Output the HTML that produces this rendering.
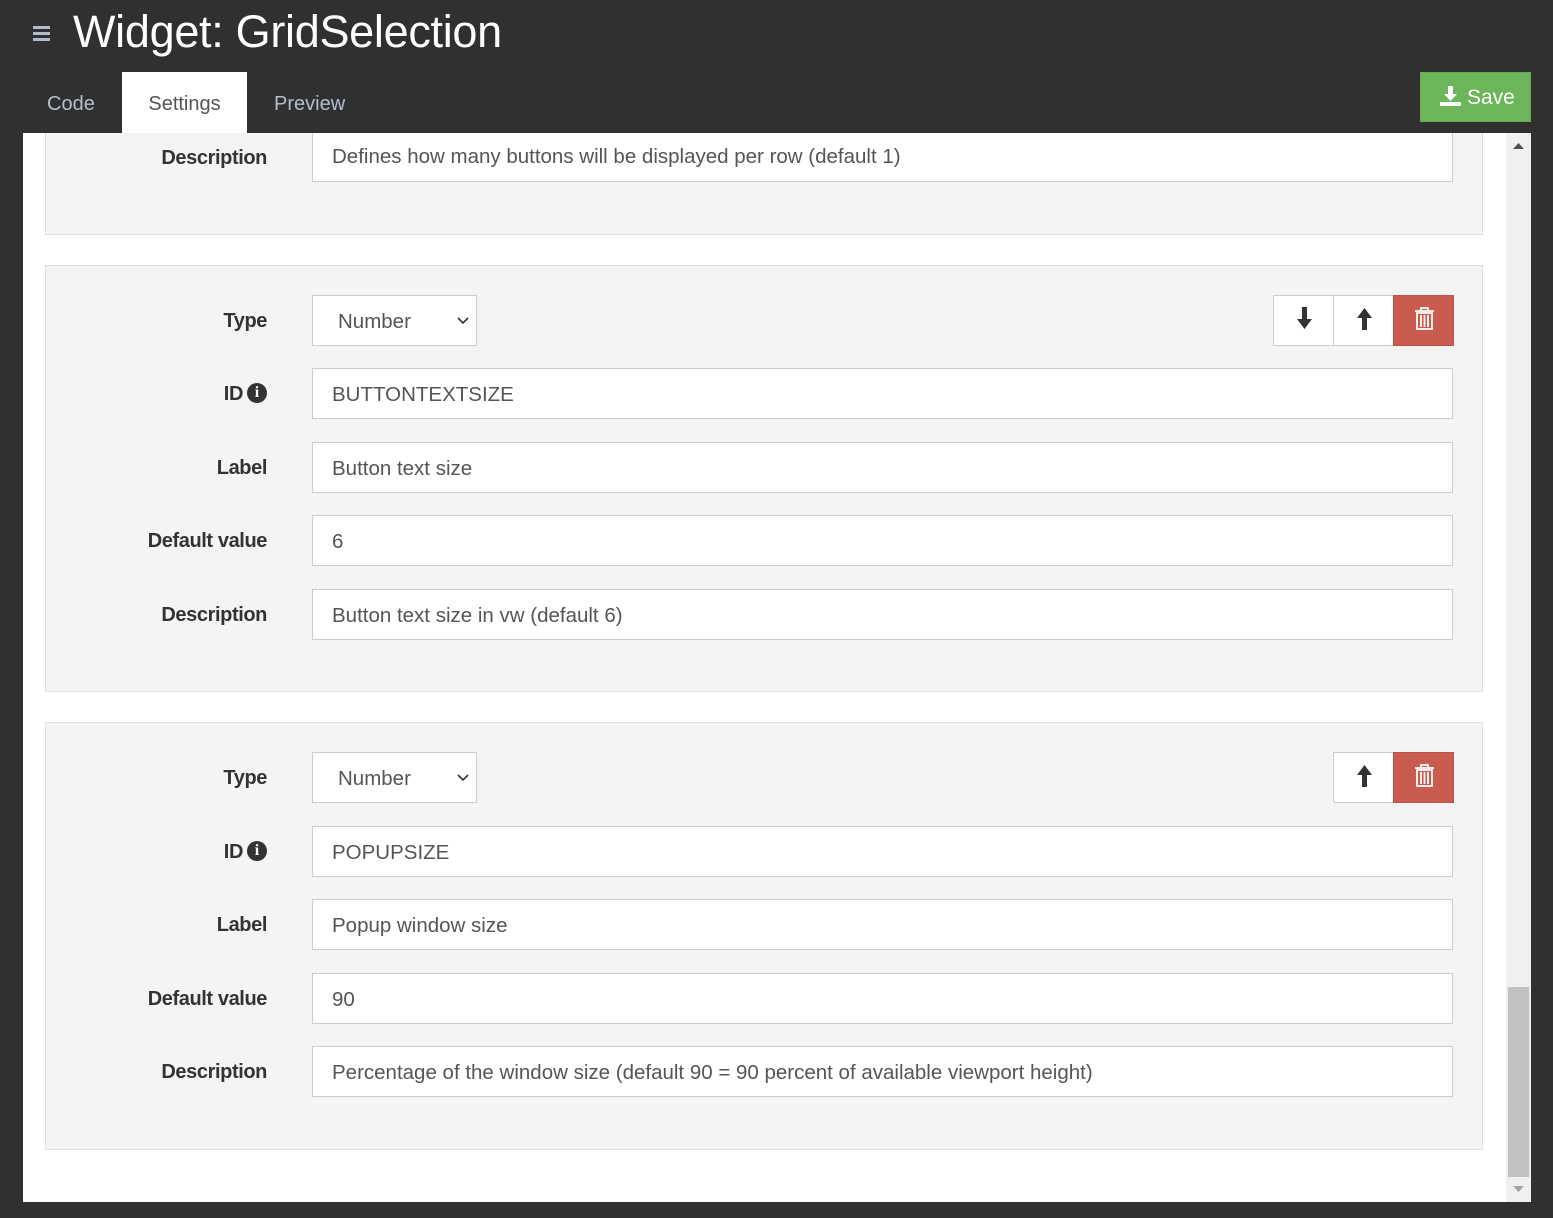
<!DOCTYPE html>
<html><head><meta charset="utf-8">
<style>
*{box-sizing:border-box;margin:0;padding:0}
body{width:1553px;height:1218px;background:#303030;position:relative;overflow:hidden;font-family:"Liberation Sans",Arial,sans-serif}
.a{position:absolute}
.title{left:73px;top:6px;font-size:45px;color:#fff;letter-spacing:-0.3px}
.hb{left:33px;width:17px;height:3px;background:#b0bccc}
.tab{top:72px;height:61px;font-size:20px;line-height:64px;color:#b3bfcf}
.save{left:1420px;top:72px;width:111px;height:50px;background:#6db55b;border:1px solid #64ab52;color:#fff;font-size:21px;line-height:50px;padding-left:46px}
.content{left:23px;top:133px;width:1508px;height:1069px;background:#fff}
.panel{left:45px;width:1438px;background:#f4f4f4;border:1px solid #e0e0e0}
.lbl{left:60px;width:207px;text-align:right;font-size:20px;font-weight:bold;color:#333;letter-spacing:-0.4px;height:50px;line-height:52px}
.inp{left:312px;width:1141px;height:51px;background:#fff;border:1px solid #ccc;font-size:20.5px;line-height:51px;padding-left:19px;color:#555;white-space:nowrap;overflow:hidden}
.sel{left:312px;width:165px;height:51px;background:#fff;border:1px solid #ccc;font-size:20.5px;line-height:51px;padding-left:25px;color:#555}
.btn{width:61px;height:51px;background:#fff;border:1px solid #ccc}
.del{background:#c95c4e;border-color:#c0504a}
.info{display:inline-block;width:20px;height:20px;border-radius:50%;background:#333;color:#fff;font-size:16px;line-height:20px;text-align:center;font-family:"Liberation Serif",serif;font-weight:bold;vertical-align:3px;margin-left:4px;letter-spacing:0}
</style></head><body>
<div class="a hb" style="top:26px"></div>
<div class="a hb" style="top:32px"></div>
<div class="a hb" style="top:38px"></div>
<div class="a title">Widget: GridSelection</div>
<div class="a tab" style="left:47px">Code</div>
<div class="a tab" style="left:274px">Preview</div>
<div class="a save"><svg class="a" style="left:19px;top:13px" width="21" height="21" viewBox="0 0 21 21"><path d="M8 0h5v8h4l-6.5 7L4 8h4z" fill="#fff"/><rect x="0" y="16" width="21" height="4" fill="#fff"/></svg>Save</div>
<div class="a content"></div>
<div class="a tab" style="left:122px;width:125px;height:62px;background:#fff;color:#555;text-align:center">Settings</div>
<!-- scrollbar -->
<div class="a" style="left:1506px;top:133px;width:25px;height:1069px;background:#f0f0f0"></div>
<div class="a" style="left:1508px;top:987px;width:21px;height:190px;background:#c1c1c1"></div>
<svg class="a" style="left:1513px;top:143px" width="11" height="6"><path d="M0 6L5.5 0 11 6z" fill="#505050"/></svg>
<svg class="a" style="left:1513px;top:1186px" width="11" height="6"><path d="M0 0h11L5.5 6z" fill="#a3a3a3"/></svg>

<!-- panel 1 -->
<div class="a panel" style="top:133px;height:102px;border-top:none"></div>
<div class="a lbl" style="top:132px">Description</div>
<div class="a inp" style="top:133px;height:49px;border-top:none;line-height:47px">Defines how many buttons will be displayed per row (default 1)</div>

<!-- panel 2 -->
<div class="a panel" style="top:265px;height:427px"></div>
<div class="a lbl" style="top:295px">Type</div>
<div class="a sel" style="top:295px">Number<svg class="a" style="left:144px;top:21px" width="12" height="8"><path d="M1 1l5 5 5-5" stroke="#333" stroke-width="1.6" fill="none"/></svg></div>
<div class="a btn" style="left:1273px;top:295px"><svg class="a" style="left:22px;top:11px" width="17" height="23"><path d="M6 0h5v12h5l-7.5 10L1 12h5z" fill="#333"/></svg></div>
<div class="a btn" style="left:1333px;top:295px"><svg class="a" style="left:22px;top:11px" width="17" height="23"><path d="M6 23h5V11h5L8.5 1 1 11h5z" fill="#333"/></svg></div>
<div class="a btn del" style="left:1393px;top:295px"><svg class="a" style="left:20px;top:11px" width="21" height="24" viewBox="0 0 21 24"><path d="M7 3V1h7v2M1 4h19M3 6h15v16H3z M7 8v12M10.5 8v12M14 8v12" stroke="#fff" stroke-width="1.8" fill="none"/></svg></div>
<div class="a lbl" style="top:368px">ID<span class="info">i</span></div>
<div class="a inp" style="top:368px">BUTTONTEXTSIZE</div>
<div class="a lbl" style="top:442px">Label</div>
<div class="a inp" style="top:442px">Button text size</div>
<div class="a lbl" style="top:515px">Default value</div>
<div class="a inp" style="top:515px">6</div>
<div class="a lbl" style="top:589px">Description</div>
<div class="a inp" style="top:589px">Button text size in vw (default 6)</div>

<!-- panel 3 -->
<div class="a panel" style="top:722px;height:428px"></div>
<div class="a lbl" style="top:752px">Type</div>
<div class="a sel" style="top:752px">Number<svg class="a" style="left:144px;top:21px" width="12" height="8"><path d="M1 1l5 5 5-5" stroke="#333" stroke-width="1.6" fill="none"/></svg></div>
<div class="a btn" style="left:1333px;top:752px"><svg class="a" style="left:22px;top:11px" width="17" height="23"><path d="M6 23h5V11h5L8.5 1 1 11h5z" fill="#333"/></svg></div>
<div class="a btn del" style="left:1393px;top:752px"><svg class="a" style="left:20px;top:11px" width="21" height="24" viewBox="0 0 21 24"><path d="M7 3V1h7v2M1 4h19M3 6h15v16H3z M7 8v12M10.5 8v12M14 8v12" stroke="#fff" stroke-width="1.8" fill="none"/></svg></div>
<div class="a lbl" style="top:826px">ID<span class="info">i</span></div>
<div class="a inp" style="top:826px">POPUPSIZE</div>
<div class="a lbl" style="top:899px">Label</div>
<div class="a inp" style="top:899px">Popup window size</div>
<div class="a lbl" style="top:973px">Default value</div>
<div class="a inp" style="top:973px">90</div>
<div class="a lbl" style="top:1046px">Description</div>
<div class="a inp" style="top:1046px">Percentage of the window size (default 90 = 90 percent of available viewport height)</div>
</body></html>
